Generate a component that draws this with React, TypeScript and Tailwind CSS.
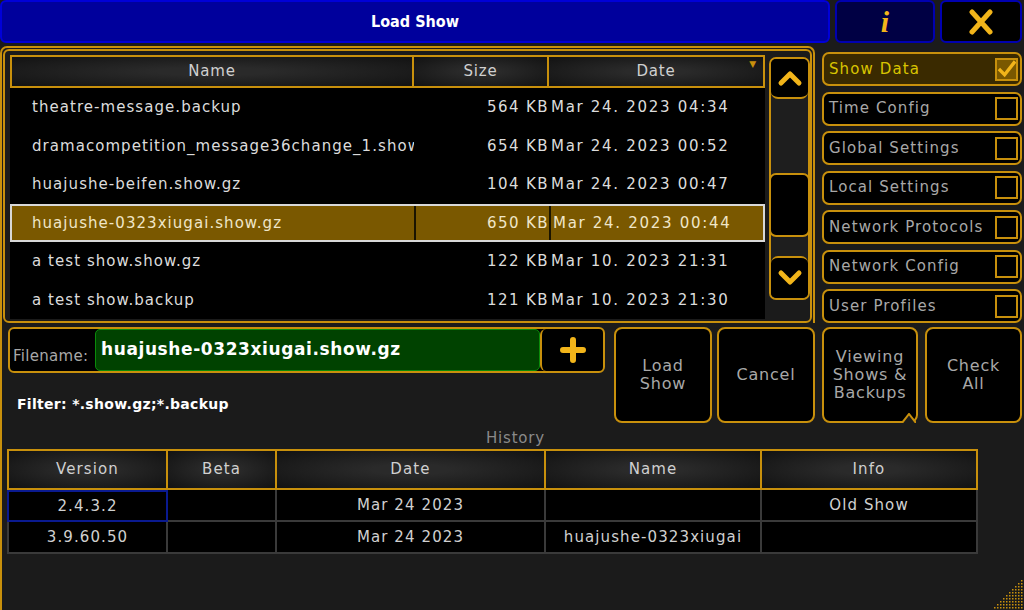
import React from "react";

const files = [
    {name: "theatre-message.backup", size: "564 KB", date: "Mar 24. 2023 04:34"},
    {name: "dramacompetition_message36change_1.show.gz", size: "654 KB", date: "Mar 24. 2023 00:52"},
    {name: "huajushe-beifen.show.gz", size: "104 KB", date: "Mar 24. 2023 00:47"},
    {name: "huajushe-0323xiugai.show.gz", size: "650 KB", date: "Mar 24. 2023 00:44", selected: true},
    {name: "a test show.show.gz", size: "122 KB", date: "Mar 10. 2023 21:31"},
    {name: "a test show.backup", size: "121 KB", date: "Mar 10. 2023 21:30"},
];

const options = [
    {label: "Show Data", checked: true},
    {label: "Time Config"},
    {label: "Global Settings"},
    {label: "Local Settings"},
    {label: "Network Protocols"},
    {label: "Network Config"},
    {label: "User Profiles"},
];

const history = [
    {version: "2.4.3.2", beta: "", date: "Mar 24 2023", name: "", info: "Old Show", focus: true},
    {version: "3.9.60.50", beta: "", date: "Mar 24 2023", name: "huajushe-0323xiugai", info: ""},
];

const headCell = "flex items-center justify-center border-2 border-[#c8900c] bg-[radial-gradient(ellipse_at_center,#2a2a2a_20%,#121212_100%)] text-[#d0d0d0]";

function Chevron({up}: {up?: boolean}) {
    return (
        <svg width="26" height="18" viewBox="0 0 26 18">
            <polyline
                points={up ? "4,14 13,5 22,14" : "4,4 13,13 22,4"}
                fill="none" stroke="#f2b51a" strokeWidth="5" strokeLinecap="round" strokeLinejoin="round"/>
        </svg>
    );
}

function Grip() {
    const dots: React.ReactNode[] = [];
    for (let r = 0; r < 10; r++) {
        for (let c = 0; c < 10; c++) {
            if (r + c >= 9) dots.push(<rect key={`${r}-${c}`} x={c * 3} y={r * 3} width="1.5" height="1.5" fill="#c8900c"/>);
        }
    }
    return <svg width="30" height="30" viewBox="0 0 30 30">{dots}</svg>;
}

function FileTable() {
    return (
        <div className="w-[755px] flex flex-col">
            <div className="grid grid-cols-[404px_135px_216px] h-[33px] text-[15px] tracking-[0.8px]">
                <div className={headCell}>Name</div>
                <div className={headCell + " border-l-0"}>Size</div>
                <div className={headCell + " border-l-0 relative"}>
                    Date
                    <span className="absolute right-[6px] top-[1px] text-[9px] text-[#c8900c]">▼</span>
                </div>
            </div>
            <div className="bg-black flex flex-col h-[231px]">
                {files.map(f => (
                    <div key={f.name}
                         className={"grid grid-cols-[404px_135px_216px] h-[38.6px] items-center text-[15px] whitespace-nowrap " +
                             (f.selected ? "bg-[#7a5800] border-2 border-[#d8d8d8] text-[#f0e6c8]" : "text-[#dcdcdc]")}>
                        <div className={"overflow-hidden h-full flex items-center tracking-[1.05px] " + (f.selected ? "pl-[20px] border-r-2 border-[#1a1400] h-[28px]" : "pl-[22px]")}>{f.name}</div>
                        <div className={"text-right h-full flex items-center justify-end tracking-[1.4px] " + (f.selected ? "border-r-2 border-[#1a1400] h-[28px]" : "")}>{f.size}</div>
                        <div className="pl-[2px] tracking-[1.7px]">{f.date}</div>
                    </div>
                ))}
            </div>
        </div>
    );
}

function Scrollbar() {
    return (
        <div className="w-[43px] h-[243px] mt-[2px] border-2 border-[#c8900c] rounded-[7px] bg-[#1e1e1e] flex flex-col overflow-hidden">
            <div className="h-[40px] bg-black border-b-2 border-[#c8900c] rounded-b-[7px] flex items-center justify-center">
                <Chevron up/>
            </div>
            <div className="h-[74px]"/>
            <div className="h-[64px] bg-black border-2 border-[#c8900c] rounded-[7px] -mx-[2px]"/>
            <div className="flex-1"/>
            <div className="h-[42px] bg-black border-t-2 border-[#c8900c] rounded-t-[7px] flex items-center justify-center">
                <Chevron/>
            </div>
        </div>
    );
}

function BigButton({children, className = ""}: {children: React.ReactNode; className?: string}) {
    return (
        <div className={"h-[96px] bg-black border-2 border-[#c8900c] rounded-[8px] flex items-center justify-center text-center text-[16px] leading-[18px] tracking-[0.8px] text-[#a8a8a8] relative " + className}>
            {children}
        </div>
    );
}

export default function App() {
    return (
        <div className="w-[1024px] h-[610px] bg-[#1b1b1b] overflow-hidden flex flex-col relative font-['DejaVu_Sans',sans-serif]">
            {/* title bar */}
            <div className="flex h-[44px] gap-[5px] pr-[2px]">
                <div className="w-[830px] h-[43px] bg-[#00009c] border-2 border-[#0000d8] rounded-[6px] flex items-center justify-center">
                    <span className="text-white font-bold text-[16px] font-['DejaVu_Sans_Condensed','DejaVu_Sans',sans-serif]">Load Show</span>
                </div>
                <div className="w-[100px] h-[43px] bg-[#000044] border-2 border-[#0000b0] rounded-[6px] flex items-center justify-center">
                    <span className="text-[#f2b51a] italic font-bold text-[30px] font-['Liberation_Serif',serif] leading-none">i</span>
                </div>
                <div className="flex-1 h-[43px] bg-black border-2 border-[#0000b0] rounded-[6px] flex items-center justify-center">
                    <svg width="26" height="26" viewBox="0 0 26 26">
                        <path d="M4 3 L22 23 M22 3 L4 23" stroke="#f2b51a" strokeWidth="5" strokeLinecap="round"/>
                    </svg>
                </div>
            </div>

            {/* top section */}
            <div className="flex h-[381px]">
                <div className="w-[815px] flex flex-col">
                    <div className="mt-[2px] h-[277px] border-l-2 border-t-2 border-r-2 border-[#c8900c] rounded-t-[7px] pt-[1px] px-[1px]">
                        <div className="h-[274px] border-2 border-[#c8900c] rounded-[6px] flex gap-[4px] pl-[5px] pt-[4px]">
                            <FileTable/>
                            <Scrollbar/>
                        </div>
                    </div>
                    <div className="flex-1 border-l-2 border-[#c8900c] flex pt-[4px]">
                        <div className="w-[603px] pl-[6px] flex flex-col">
                            <div className="h-[46px] border-2 border-[#c8900c] rounded-[6px] bg-black flex overflow-hidden">
                                <div className="w-[85px] flex items-end pb-[4px] pl-[3px] text-[15px] tracking-[0.3px] text-[#a8a8a8]">Filename:</div>
                                <div className="flex-1 bg-[#004200] border border-[#0a8a0a] rounded-[5px] flex items-center pl-[5px] text-white font-bold text-[17px] tracking-[0.6px]">
                                    huajushe-0323xiugai.show.gz
                                </div>
                                <div className="w-[63px] border-l-2 border-[#c8900c] rounded-[6px] flex items-center justify-center">
                                    <svg width="26" height="26" viewBox="0 0 26 26">
                                        <path d="M13 3 V23 M3 13 H23" stroke="#f2b51a" strokeWidth="6" strokeLinecap="round"/>
                                    </svg>
                                </div>
                            </div>
                            <div className="mt-[21px] pl-[9px] text-white font-bold text-[14px] tracking-[0.3px]">Filter: *.show.gz;*.backup</div>
                        </div>
                        <BigButton className="w-[98px] ml-[9px]">Load<br/>Show</BigButton>
                        <BigButton className="w-[98px] ml-[5px]">Cancel</BigButton>
                    </div>
                </div>

                <div className="ml-[7px] w-[200px] flex flex-col pt-[8px]">
                    <div className="flex flex-col gap-[5.5px]">
                        {options.map(o => (
                            <div key={o.label}
                                 className={"h-[34px] border-2 border-[#c8900c] rounded-[7px] flex items-center justify-between pl-[5px] pr-[2px] text-[15px] tracking-[1.1px] " +
                                     (o.checked ? "bg-[#3a2a00] text-[#d8c400]" : "bg-black text-[#a8a8a8]")}>
                                <span>{o.label}</span>
                                <span className={"w-[23px] h-[23px] border-2 border-[#c8900c] flex items-center justify-center " + (o.checked ? "bg-[#7a5800]" : "bg-black")}>
                                    {o.checked && (
                                        <svg width="20" height="18" viewBox="0 0 20 18">
                                            <polyline points="2,9 8,15 19,1" fill="none" stroke="#f2b51a" strokeWidth="3.5"/>
                                        </svg>
                                    )}
                                </span>
                            </div>
                        ))}
                    </div>
                    <div className="mt-[4px] flex gap-[7px]">
                        <BigButton className="w-[96px]">
                            Viewing<br/>Shows &amp;<br/>Backups
                            <svg className="absolute bottom-[-2px] left-[78px]" width="14" height="10" viewBox="0 0 14 10">
                                <path d="M0 10 L7 1 L14 10" fill="#1b1b1b" stroke="#c8900c" strokeWidth="2"/>
                            </svg>
                        </BigButton>
                        <BigButton className="flex-1">Check<br/>All</BigButton>
                    </div>
                </div>
            </div>

            {/* history */}
            <div className="flex-1 border-l-2 border-[#c8900c] flex flex-col pl-[5px]">
                <div className="h-[24px] flex items-end justify-center text-[15px] text-[#8a8a8a] tracking-[0.8px]">History</div>
                <div className="w-[971px] text-[15px] tracking-[1.1px]">
                    <div className="grid grid-cols-[161px_109px_269px_216px_216px] h-[41px]">
                        <div className={headCell}>Version</div>
                        <div className={headCell + " border-l-0"}>Beta</div>
                        <div className={headCell + " border-l-0"}>Date</div>
                        <div className={headCell + " border-l-0"}>Name</div>
                        <div className={headCell + " border-l-0"}>Info</div>
                    </div>
                    {history.map(h => (
                        <div key={h.version} className="grid grid-cols-[161px_109px_269px_216px_216px] h-[32px] text-[#d0d0d0]">
                            <div className={"bg-black flex items-center justify-center border-2 " + (h.focus ? "border-[#0a1a90]" : "border-[#3a3a3a] border-t-0")}>{h.version}</div>
                            <div className="bg-black border-2 border-l-0 border-t-0 border-[#3a3a3a]"/>
                            <div className="bg-black flex items-center justify-center border-2 border-l-0 border-t-0 border-[#3a3a3a]">{h.date}</div>
                            <div className="bg-black flex items-center justify-center border-2 border-l-0 border-t-0 border-[#3a3a3a]">{h.name}</div>
                            <div className="bg-black flex items-center justify-center border-2 border-l-0 border-t-0 border-[#3a3a3a]">{h.info}</div>
                        </div>
                    ))}
                </div>
            </div>

            <div className="absolute right-0 bottom-0">
                <Grip/>
            </div>
        </div>
    );
}
